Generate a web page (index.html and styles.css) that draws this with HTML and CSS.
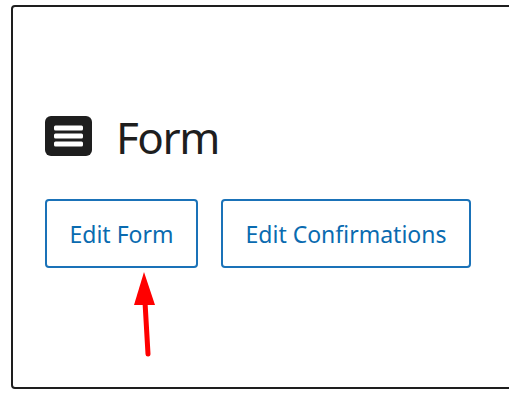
FILE: index.html
```html
<!DOCTYPE html>
<html lang="en">
<head>
  <meta charset="UTF-8" />
  <title>Form block</title>
  <link rel="stylesheet" href="styles.css">
</head>
<body>
  <div class="block">
    <div class="block-title">
      <svg class="block-icon" viewBox="0 0 47 40" aria-hidden="true">
        <rect x="0" y="0" width="47" height="40" rx="6" fill="#1e1e1e"/>
        <rect x="9" y="9.5" width="29" height="5" rx="1.5" fill="#fff"/>
        <rect x="9" y="17.5" width="29" height="5" rx="1.5" fill="#fff"/>
        <rect x="9" y="25.5" width="29" height="5" rx="1.5" fill="#fff"/>
      </svg>
      <h2>Form</h2>
    </div>
    <div class="actions">
      <button class="btn">Edit Form</button>
      <button class="btn">Edit Confirmations</button>
    </div>

    <!-- pointer under the first button -->
    <svg class="pointer" width="40" height="90" viewBox="0 0 40 90" aria-hidden="true">
      <polygon points="17,0 7,33 28,33" fill="#ff0000"/>
      <line x1="18" y1="30" x2="21" y2="82" stroke="#ff0000" stroke-width="5" stroke-linecap="round"/>
    </svg>
  </div>
</body>
</html>
```

FILE: styles.css
```css
body {
  margin: 0;
  background: #fff;
  font-family: "Noto Sans", "Open Sans", sans-serif;
  overflow: hidden;
}
.block {
  position: relative;
  box-sizing: border-box;
  width: 530px;
  height: 384px;
  margin: 5px 0 0 11px;
  padding: 99px 0 0 32px;
  border: 2px solid #1e1e1e;
  border-radius: 4px;
}
.block-title {
  display: flex;
  align-items: center;
  gap: 24px;
}
.block-icon {
  width: 47px;
  height: 40px;
  display: block;
}
.block-title h2 {
  margin: 0;
  padding-top: 2px;
  font-size: 44px;
  font-weight: 400;
  line-height: 58px;
  letter-spacing: -1.5px;
  color: #1e1e1e;
}
.actions {
  display: flex;
  gap: 23px;
  margin-top: 33px;
}
.btn {
  font-family: inherit;
  font-size: 23px;
  color: #0a6bb0;
  background: #fff;
  border: 2px solid #1a72b8;
  border-radius: 4px;
  height: 69px;
  padding: 0 22.5px;
  cursor: pointer;
}
.pointer {
  position: absolute;
  left: 114px;
  top: 265px;
}
```
